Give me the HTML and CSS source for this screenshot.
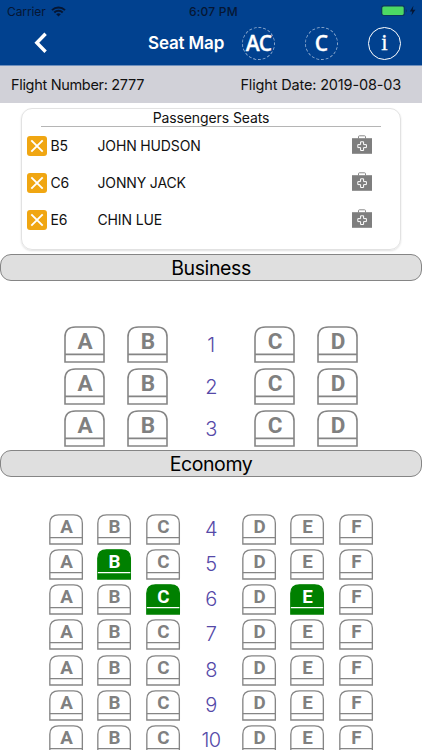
FILE: index.html
```html
<!DOCTYPE html>
<html lang="en">
<head>
  <meta charset="UTF-8" />
  <meta name="viewport" content="width=device-width, initial-scale=1.0" />
  <title>Seat Map</title>
  <link rel="stylesheet" href="styles.css">
</head>
<body>
  <header class="header">
    <div class="status-bar">
      <span class="carrier">Carrier</span>
      <svg class="wifi" viewBox="0 0 15 11" width="15" height="11">
        <path d="M1 4.1a9.3 9.3 0 0 1 13 0M3.3 6.5a6 6 0 0 1 8.4 0" fill="none" stroke="#061633" stroke-width="2" />
        <path d="M7.5 10.6 5.2 8.3a3.3 3.3 0 0 1 4.6 0z" fill="#061633" />
      </svg>
      <span class="time">6:07 PM</span>
      <svg class="battery" viewBox="0 0 36 12" width="36" height="12">
        <rect x="0.7" y="0.9" width="22.6" height="9.6" rx="2" fill="#4cd964" stroke="#0b3560" stroke-width="1.2" />
        <path d="M24.8 4.2v3q1.2-.4 1.2-1.5t-1.2-1.5z" fill="#0b3560" />
        <path d="M32.4 0.8 28.8 6.4h2.5l-.9 4.2 4-5.8h-2.7z" fill="#061633" />
      </svg>
    </div>
    <nav class="nav-bar">
      <svg class="back" viewBox="0 0 14 22" width="14" height="22">
        <path d="M11.6 1.8 2.8 10.8l8.8 9" fill="none" stroke="#fff" stroke-width="3.4" />
      </svg>
      <h1>Seat Map</h1>
      <span class="round-btn dashed ac">AC</span>
      <span class="round-btn dashed">C</span>
      <span class="round-btn info">i</span>
    </nav>
  </header>

  <div class="flight-bar">
    <span class="flight-number">Flight Number: 2777</span>
    <span class="flight-date">Flight Date: 2019-08-03</span>
  </div>

  <section class="passengers">
    <h2>Passengers Seats</h2>
    <div id="passenger-list"></div>
  </section>

  <h3 class="cabin-title">Business</h3>
  <div class="cabin business" id="business"></div>

  <h3 class="cabin-title economy-title">Economy</h3>
  <div class="cabin economy" id="economy"></div>

  <script>
    const passengers = [
      { seat: "B5", name: "JOHN HUDSON" },
      { seat: "C6", name: "JONNY JACK" },
      { seat: "E6", name: "CHIN LUE" }
    ];

    const closeIcon = `
      <svg class="remove" viewBox="0 0 20 20" width="20" height="20">
        <rect width="20" height="20" rx="3" fill="#f0a612" />
        <path d="M4.3 4.3l11.4 11.4M15.7 4.3 4.3 15.7" stroke="#fff" stroke-width="1.9" />
      </svg>`;

    const kitIcon = `
      <svg class="kit" viewBox="0 0 20 19" width="20" height="19">
        <path d="M6.5 3.5V1.7q0-.9.9-.9h5.2q.9 0 .9.9v1.8" fill="none" stroke="#8a8a8a" stroke-width="1" />
        <rect y="3.2" width="20" height="15.6" fill="#7e7e7e" />
        <path d="M8.6 6.8h3v2.8h2.8v3h-2.8v2.9h-3v-2.9H5.8v-3h2.8z" fill="none" stroke="#fff" stroke-width="1" />
      </svg>`;

    document.getElementById("passenger-list").innerHTML = passengers.map(p => `
      <div class="passenger">
        ${closeIcon}
        <span class="seat-no">${p.seat}</span>
        <span class="name">${p.name}</span>
        ${kitIcon}
      </div>`).join("");

    const taken = passengers.map(p => p.seat);

    function seat(letter, row) {
      const cls = taken.includes(letter + row) ? "seat taken" : "seat";
      return `
        <svg class="${cls}" viewBox="0 0 41 37">
          <path class="shell" d="M1 36V11Q1 1 11.5 1H29.5Q40 1 40 11V36Z" />
          <path class="base" d="M1 28.4H40" />
          <text x="21" y="23.3">${letter}</text>
        </svg>`;
    }

    function drawCabin(id, letters, from, to) {
      let html = "";
      for (let row = from; row <= to; row++) {
        const cells = letters.split("").map(l => l === " " ? `<span class="row-no">${row}</span>` : seat(l, row));
        html += `<div class="row">${cells.join("")}</div>`;
      }
      document.getElementById(id).innerHTML = html;
    }

    drawCabin("business", "AB CD", 1, 3);
    drawCabin("economy", "ABC DEF", 4, 10);
  </script>
</body>
</html>
```
FILE: styles.css
```css
* {
  box-sizing: border-box;
}

body {
  margin: 0;
  height: 750px;
  overflow: hidden;
  background: #fff;
  color: #111;
  font-family: Inter, "Liberation Sans", sans-serif;
}

h1, h2, h3 {
  margin: 0;
  font-weight: 400;
}

svg {
  display: block;
  flex: none;
}

/* header */
.header {
  height: 66px;
  background: #01418f;
  border-bottom: 1px solid #6f8fbc;
}

.status-bar {
  display: flex;
  align-items: center;
  height: 22px;
  padding: 0 5px 0 7px;
  color: #061633;
  font-size: 12px;
}

.carrier {
  width: 44px;
  letter-spacing: -0.1px;
}

.time {
  margin-left: 123px;
  font-weight: 500;
  letter-spacing: 0.2px;
  white-space: nowrap;
}

.battery {
  margin-left: auto;
}

.nav-bar {
  display: flex;
  align-items: center;
  height: 42px;
  padding-left: 34px;
  color: #fff;
}

.nav-bar h1 {
  width: 77px;
  margin-left: 100px;
  font-size: 17px;
  font-weight: 600;
  letter-spacing: -0.15px;
  white-space: nowrap;
}

.round-btn {
  display: flex;
  align-items: center;
  justify-content: center;
  width: 33px;
  height: 33px;
  margin-left: 30px;
  border-radius: 50%;
  font-family: "Open Sans", "Noto Sans", sans-serif;
  font-size: 21px;
  font-weight: 600;
  -webkit-text-stroke: 0.3px #fff;
}

.round-btn.ac {
  margin-left: 17px;
  letter-spacing: -0.8px;
}

.dashed {
  border: 1px dashed #8ba8cd;
}

.info {
  border: 1.5px solid #fff;
  font-family: "Liberation Serif", serif;
  font-size: 23px;
  font-weight: 400;
}

/* flight info */
.flight-bar {
  display: flex;
  align-items: center;
  justify-content: space-between;
  height: 37px;
  padding: 0 21px 0 11px;
  background: #d1d1d8;
  font-size: 14.5px;
}

.flight-number {
  letter-spacing: -0.32px;
}

.flight-date {
  letter-spacing: -0.16px;
}

/* passengers */
.passengers {
  height: 142px;
  margin: 5px 21px 0;
  padding: 0 5px;
  border: 1px solid #e2e2e2;
  border-radius: 11px;
  box-shadow: 0 1px 2px #00000020;
}

.passengers h2 {
  height: 18px;
  margin: 0 14px;
  border-bottom: 1px solid #b5b5b5;
  font-size: 14px;
  line-height: 17px;
  letter-spacing: -0.1px;
  text-align: center;
}

.passenger {
  display: flex;
  align-items: center;
  height: 37px;
  margin-left: -0.5px;
  font-size: 14px;
  letter-spacing: -0.15px;
}

.seat-no {
  width: 47px;
  margin-left: 4px;
}

.kit {
  margin: -3px 23px 0 auto;
}

/* cabins */
.cabin-title {
  height: 27px;
  margin-top: 4px;
  border: 1px solid #858585;
  border-radius: 11px;
  background: #dfdfdf;
  color: #000;
  font-size: 19.5px;
  line-height: 26px;
  letter-spacing: -0.4px;
  text-align: center;
}

.economy-title {
  margin-top: 0;
}

.row {
  display: grid;
  align-items: start;
  justify-items: center;
}

.business {
  height: 169px;
  padding: 45px 53px 0;
}

.business .row {
  grid-template-columns: repeat(5, 1fr);
  height: 42.2px;
}

.business .seat {
  width: 41px;
  height: 37px;
}

.economy {
  padding: 37px 42px 0;
}

.economy .row {
  grid-template-columns: repeat(7, 1fr);
  height: 35.15px;
}

.economy .seat {
  width: 34.2px;
  height: 30.9px;
}

.seat {
  overflow: visible;
}

.shell,
.base {
  fill: none;
  stroke: #858585;
  stroke-width: 1.6;
}

.seat text {
  fill: #808080;
  font-family: Roboto, sans-serif;
  font-size: 22.5px;
  font-weight: 700;
  text-anchor: middle;
}

.taken .shell {
  fill: #008000;
  stroke: #008000;
}

.taken .base {
  stroke: #fff;
}

.taken text {
  fill: #fff;
}

.row-no {
  color: #5549a8;
  font-size: 20px;
  font-weight: 300;
  line-height: 38px;
  letter-spacing: -0.6px;
}

.economy .row-no {
  line-height: 31px;
}
```
